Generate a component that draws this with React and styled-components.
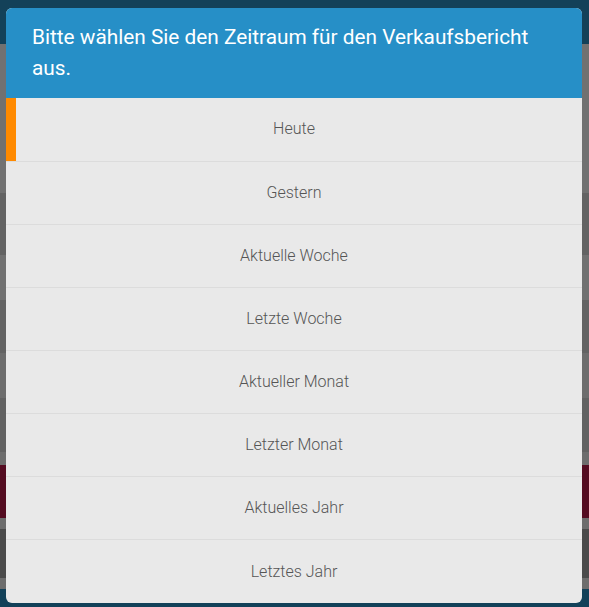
import styled, { createGlobalStyle } from "styled-components"

const GlobalStyle = createGlobalStyle`
  html, body {
    margin: 0;
    padding: 0;
    background: #124159;
    font-family: Roboto, "Liberation Sans", sans-serif;
  }
`

const Page = styled.div`
  position: relative;
  width: 589px;
  height: 607px;
  overflow: hidden;
`

const Backdrop = styled.div`
  display: flex;
  flex-direction: column;
  height: 100%;
`

const Stripe = styled.div`
  height: ${p => p.h}px;
  flex-shrink: 0;
  background: ${p => p.color};
`

const Dialog = styled.div`
  position: absolute;
  top: 8px;
  left: 6px;
  width: 576px;
  border-radius: 6px;
  overflow: hidden;
  background: #e9e9e9;
`

const Header = styled.div`
  background: #268fc7;
  color: #fff;
  font-size: 20.8px;
  line-height: 31px;
  padding: 14px 26px;
`

const List = styled.div`
  display: flex;
  flex-direction: column;
`

const Option = styled.div`
  position: relative;
  height: 63px;
  box-sizing: border-box;
  display: flex;
  align-items: center;
  justify-content: center;
  border-bottom: 1px solid #dcdcdc;
  padding-bottom: 2px;
  color: #555;
  font-size: 16px;
  font-weight: 300;

  &::before {
    content: "";
    position: absolute;
    left: 0;
    top: 0;
    bottom: 0;
    width: 10px;
    background: ${p => (p.active ? "#ff8a00" : "transparent")};
  }

  &:first-child {
    height: 64px;
  }

  &:last-child {
    border-bottom: none;
    padding-bottom: 1px;
  }
`

const stripes = [
  [44, "#134159"],
  [149, "#717171"],
  [62, "#636363"],
  [45, "#717171"],
  [53, "#636363"],
  [45, "#6d6d6d"],
  [54, "#626262"],
  [13, "#6d6d6d"],
  [53, "#540c21"],
  [11, "#6d6d6d"],
  [49, "#4b4b4b"],
  [11, "#6d6d6d"],
  [18, "#124159"],
]

const options = [
  "Heute",
  "Gestern",
  "Aktuelle Woche",
  "Letzte Woche",
  "Aktueller Monat",
  "Letzter Monat",
  "Aktuelles Jahr",
  "Letztes Jahr",
]

const App = () => {
  return (
    <Page>
      <GlobalStyle />
      <Backdrop>
        {stripes.map(([h, c], i) => (
          <Stripe key={i} h={h} color={c} />
        ))}
      </Backdrop>
      <Dialog>
        <Header>Bitte wählen Sie den Zeitraum für den Verkaufsbericht aus.</Header>
        <List>
          {options.map((o, i) => (
            <Option key={o} active={i === 0}>
              {o}
            </Option>
          ))}
        </List>
      </Dialog>
    </Page>
  )
}

export default App
